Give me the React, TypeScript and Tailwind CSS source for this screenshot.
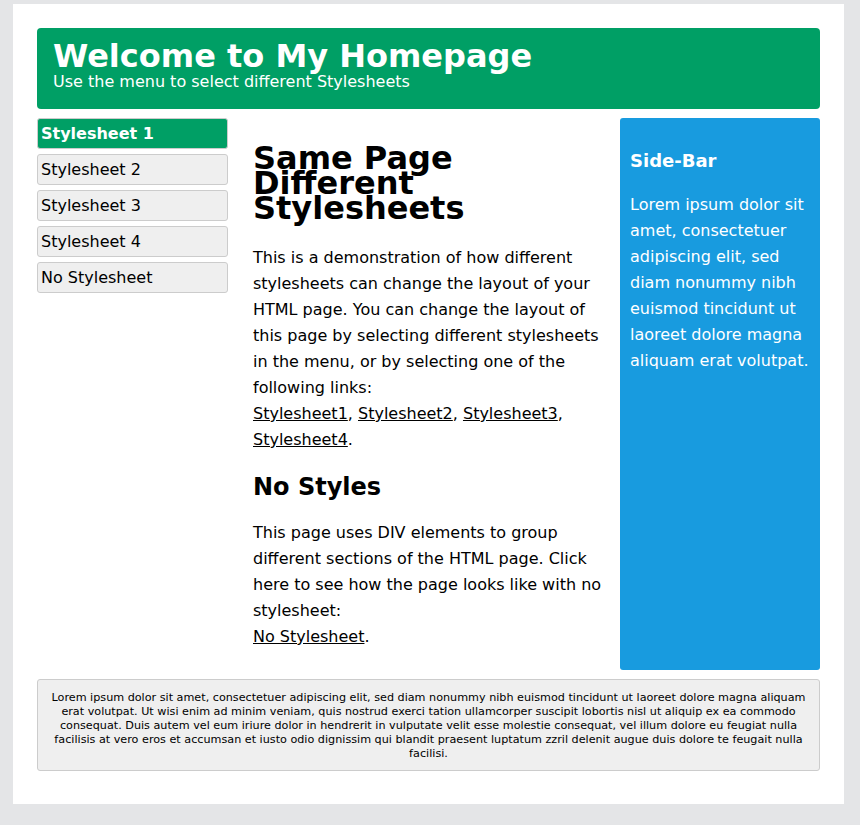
export default function App() {
  const font = { fontFamily: '"DejaVu Sans", Verdana, sans-serif' };
  return (
    <div className="min-h-[825px] bg-[#e4e5e7] pt-[4px] pl-[13px]" style={font}>
      <div className="w-[831px] bg-white px-[24px] pt-[24px] pb-[33px]">
        <div className="rounded-[4px] bg-[#009f65] px-[16px] pt-[12px] pb-[17px] text-white">
          <h1 className="text-[32px] font-bold leading-[32px]">Welcome to My Homepage</h1>
          <p className="text-[16px] leading-[20px]">Use the menu to select different Stylesheets</p>
        </div>
        <div className="mt-[9px] flex items-stretch">
          <div className="flex w-[191px] shrink-0 flex-col gap-[5px]">
            <div className="rounded-[3px] border border-[#cccccc] bg-[#009f65] px-[3px] text-[16px] font-bold leading-[29px] text-white">Stylesheet 1</div>
            <div className="rounded-[3px] border border-[#cccccc] bg-[#efefef] px-[3px] text-[16px] leading-[29px] text-black">Stylesheet 2</div>
            <div className="rounded-[3px] border border-[#cccccc] bg-[#efefef] px-[3px] text-[16px] leading-[29px] text-black">Stylesheet 3</div>
            <div className="rounded-[3px] border border-[#cccccc] bg-[#efefef] px-[3px] text-[16px] leading-[29px] text-black">Stylesheet 4</div>
            <div className="rounded-[3px] border border-[#cccccc] bg-[#efefef] px-[3px] text-[16px] leading-[29px] text-black">No Stylesheet</div>
          </div>
          <div className="flex-1 pl-[25px] pr-[10px] pt-[28px] pb-[20px] text-black">
            <h1 className="text-[32px] font-bold leading-[25px]">Same Page Different Stylesheets</h1>
            <p className="mt-[24px] text-[16px] leading-[26px]">
              This is a demonstration of how different stylesheets can change the layout of your HTML page. You can change the layout of this page by selecting different stylesheets in the menu, or by selecting one of the following links:
              <br />
              <a className="underline">Stylesheet1</a>, <a className="underline">Stylesheet2</a>, <a className="underline">Stylesheet3</a>, <a className="underline">Stylesheet4</a>.
            </p>
            <h2 className="mt-[19px] text-[24px] font-bold leading-[30px]">No Styles</h2>
            <p className="mt-[18px] text-[16px] leading-[26px]">
              This page uses DIV elements to group different sections of the HTML page. Click here to see how the page looks like with no stylesheet:
              <br />
              <a className="underline">No Stylesheet</a>.
            </p>
          </div>
          <div className="w-[200px] shrink-0 rounded-[3px] bg-[#189bdf] px-[10px] pt-[32px] pb-[20px] text-white">
            <h3 className="text-[18px] font-bold leading-[22px]">Side-Bar</h3>
            <p className="mt-[20px] text-[16px] leading-[26px]">
              Lorem ipsum dolor sit amet, consectetuer adipiscing elit, sed diam nonummy nibh euismod tincidunt ut laoreet dolore magna aliquam erat volutpat.
            </p>
          </div>
        </div>
        <div className="mt-[9px] rounded-[3px] border border-[#cccccc] bg-[#efefef] px-[10px] pt-[11px] pb-[9px] text-center text-[11.2px] leading-[14px] text-black">
          Lorem ipsum dolor sit amet, consectetuer adipiscing elit, sed diam nonummy nibh euismod tincidunt ut laoreet dolore magna aliquam erat volutpat. Ut wisi enim ad minim veniam, quis nostrud exerci tation ullamcorper suscipit lobortis nisl ut aliquip ex ea commodo consequat. Duis autem vel eum iriure dolor in hendrerit in vulputate velit esse molestie consequat, vel illum dolore eu feugiat nulla facilisis at vero eros et accumsan et iusto odio dignissim qui blandit praesent luptatum zzril delenit augue duis dolore te feugait nulla facilisi.
        </div>
      </div>
    </div>
  );
}
